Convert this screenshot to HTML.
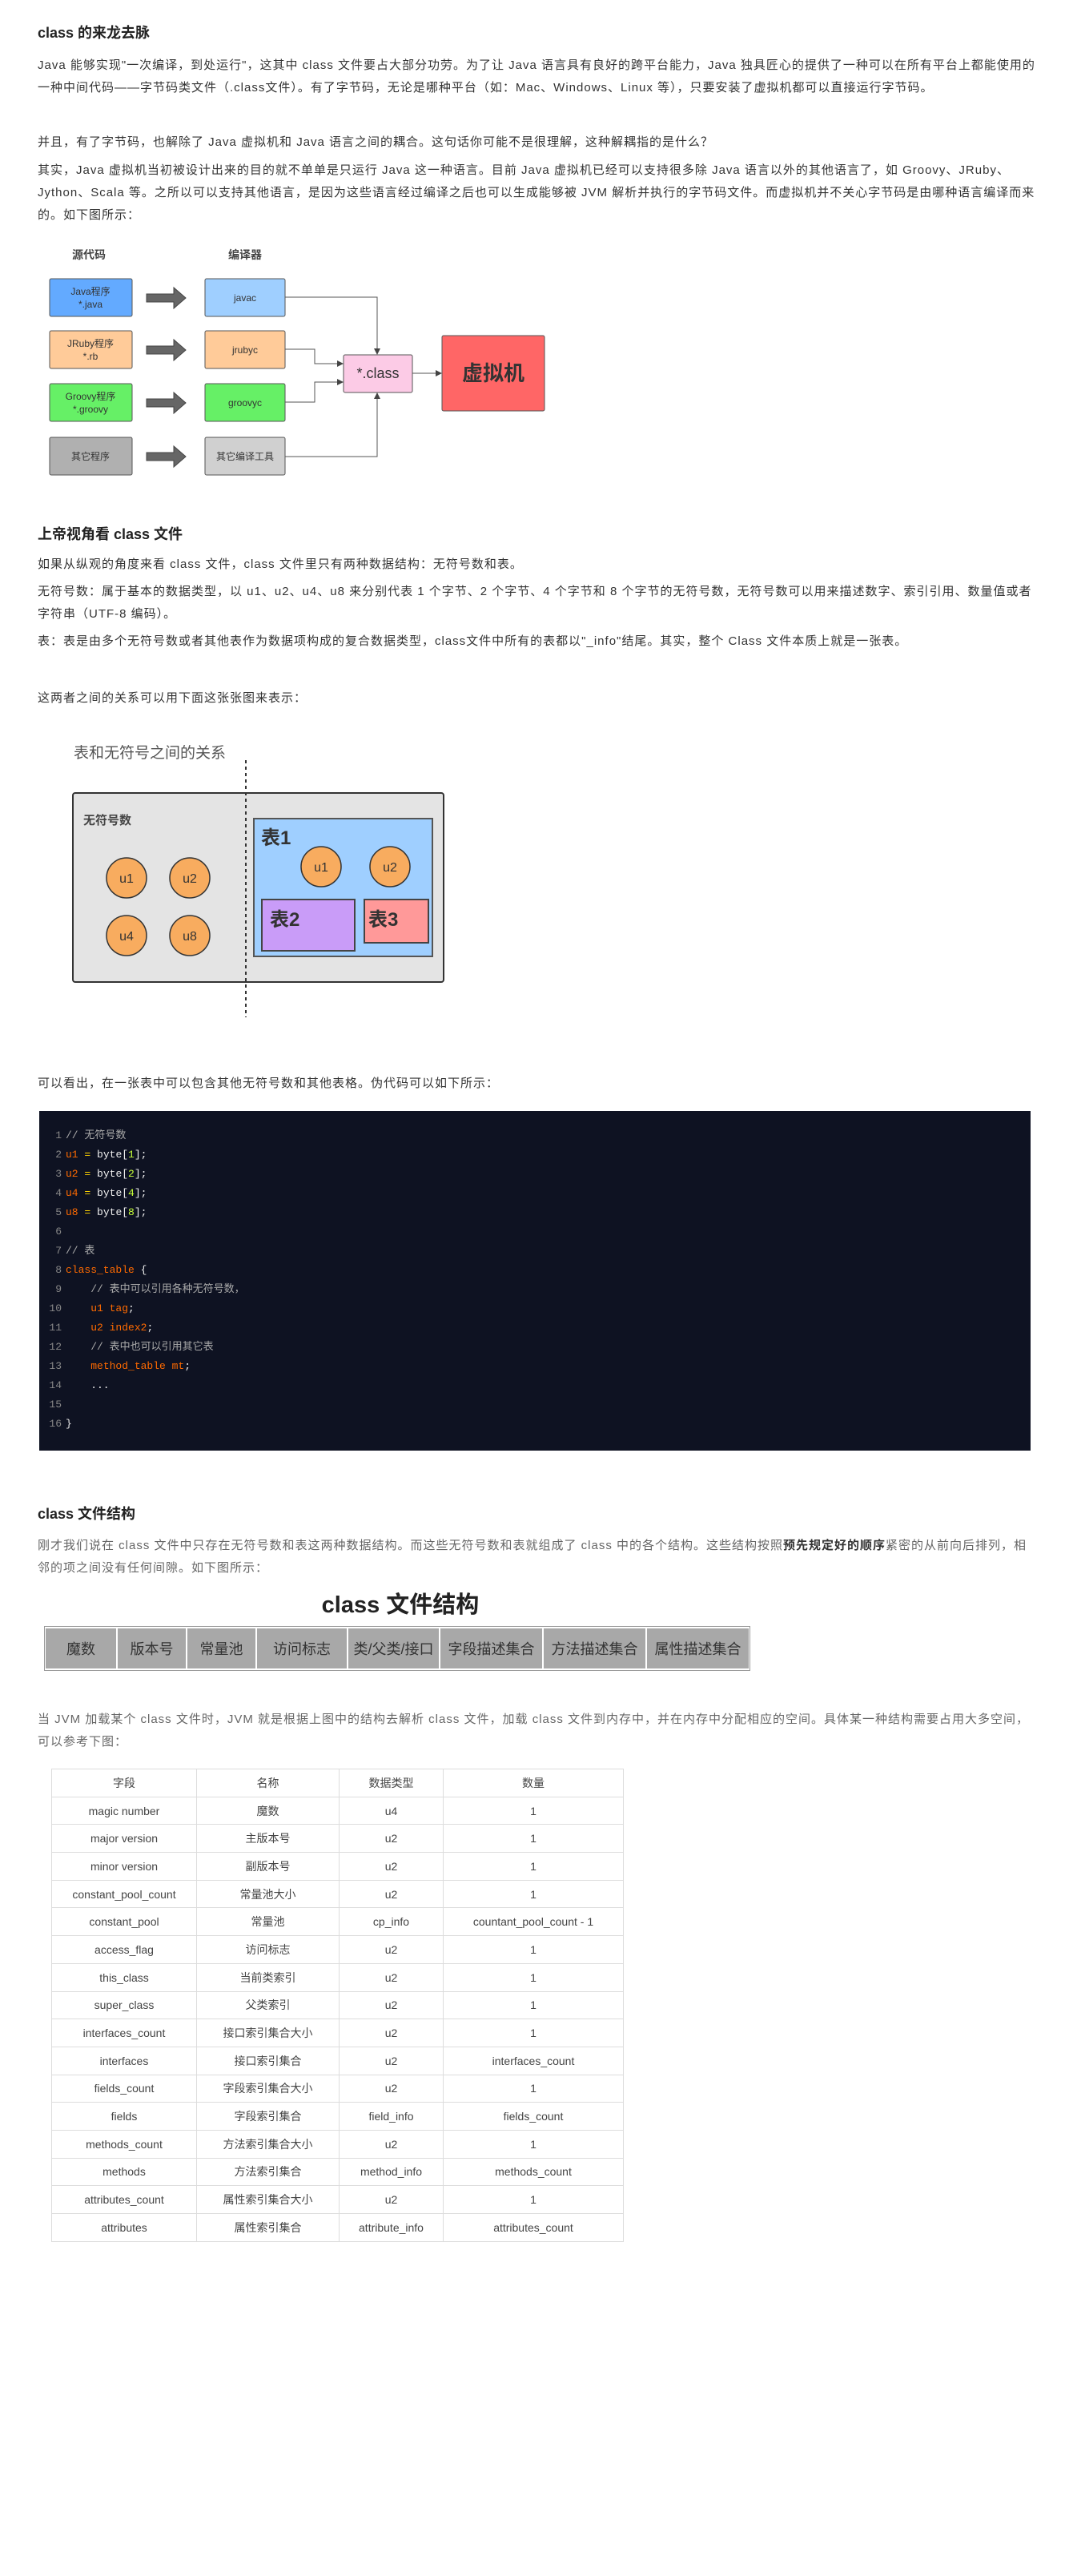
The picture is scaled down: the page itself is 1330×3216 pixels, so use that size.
<!DOCTYPE html>
<html><head><meta charset="utf-8"><style>
*{margin:0;padding:0;box-sizing:border-box}
body{width:1330px;height:3216px;background:#fff;position:relative;font-family:"Liberation Sans","Noto Sans CJK SC",sans-serif;color:#333;font-size:14px;overflow:hidden}
.a{position:absolute;left:47px;width:1250px;line-height:28px;font-size:15px;letter-spacing:1px}
h2{position:absolute;left:47px;font-size:18px;font-weight:bold;color:#222;line-height:28px}
.g{color:#666}
.code{position:absolute;left:49px;top:1387px;width:1238px;height:424px;background:#0e1222;font-family:"Liberation Mono","Noto Sans CJK SC",monospace;font-size:13px;color:#eee;padding-top:19px}
.code div{height:24px;line-height:24px;white-space:pre}
.n{color:#888;display:inline-block;width:33px;text-align:right;padding-right:5px}
.o{color:#ff6a00}.y{color:#ffd400}.l{color:#c8ff3a}.c{color:#aaa}
svg{position:absolute;left:0;overflow:visible}
table.t{position:absolute;left:64px;top:2208px;border-collapse:collapse;font-size:14px;color:#444}
table.t td{border:1px solid #ddd;height:34.7px;text-align:center;padding:0}
</style></head><body>
<h2 style="top:27px">class 的来龙去脉</h2>
<div class="a" style="top:68px">Java 能够实现"一次编译，到处运行"，这其中 class 文件要占大部分功劳。为了让 Java 语言具有良好的跨平台能力，Java 独具匠心的提供了一种可以在所有平台上都能使用的一种中间代码——字节码类文件（.class文件）。有了字节码，无论是哪种平台（如：Mac、Windows、Linux 等），只要安装了虚拟机都可以直接运行字节码。</div>
<div class="a" style="top:164px">并且，有了字节码，也解除了 Java 虚拟机和 Java 语言之间的耦合。这句话你可能不是很理解，这种解耦指的是什么？</div>
<div class="a" style="top:199px">其实，Java 虚拟机当初被设计出来的目的就不单单是只运行 Java 这一种语言。目前 Java 虚拟机已经可以支持很多除 Java 语言以外的其他语言了，如 Groovy、JRuby、Jython、Scala 等。之所以可以支持其他语言，是因为这些语言经过编译之后也可以生成能够被 JVM 解析并执行的字节码文件。而虚拟机并不关心字节码是由哪种语言编译而来的。如下图所示：</div>

<svg width="700" height="300" style="top:300px" font-family="Liberation Sans,Noto Sans CJK SC,sans-serif">
<g font-size="14" font-weight="bold" fill="#444" text-anchor="middle"><text x="111" y="23">源代码</text><text x="306" y="23">编译器</text></g>
<g stroke="#555" stroke-width="1" font-size="12" text-anchor="middle" fill="#333">
<rect x="62" y="48" width="103" height="47" rx="2" fill="#63aaff"/><rect x="256" y="48" width="100" height="47" rx="2" fill="#9fcfff"/>
<rect x="62" y="113" width="103" height="47" rx="2" fill="#ffcb99"/><rect x="256" y="113" width="100" height="47" rx="2" fill="#ffcb99"/>
<rect x="62" y="179" width="103" height="47" rx="2" fill="#66f066"/><rect x="256" y="179" width="100" height="47" rx="2" fill="#66f066"/>
<rect x="62" y="246" width="103" height="47" rx="2" fill="#b0b0b0"/><rect x="256" y="246" width="100" height="47" rx="2" fill="#d0d0d0"/>
<rect x="429" y="143" width="86" height="47" rx="2" fill="#fccbe6"/><rect x="552" y="119" width="128" height="94" rx="2" fill="#ff6666"/>
<path d="M356 71H471V137M356 136H393V154H423M356 202H393V177H423M356 270H471V196M515 166H546" fill="none"/>
</g>
<g fill="#444"><path d="M471 143l-4-8h8zM429 154l-8-4v8zM429 177l-8-4v8zM471 190l-4 8h8zM552 166l-8-4v8z"/></g>
<g fill="#666" stroke="#444" stroke-width="1"><path d="M183 67h34v-8l15 13-15 13v-8h-34z"/><path d="M183 132h34v-8l15 13-15 13v-8h-34z"/><path d="M183 198h34v-8l15 13-15 13v-8h-34z"/><path d="M183 265h34v-8l15 13-15 13v-8h-34z"/></g>
<g font-size="12" fill="#333" text-anchor="middle">
<text x="113" y="68">Java程序</text><text x="113" y="84">*.java</text><text x="306" y="76">javac</text>
<text x="113" y="133">JRuby程序</text><text x="113" y="149">*.rb</text><text x="306" y="141">jrubyc</text>
<text x="113" y="199">Groovy程序</text><text x="113" y="215">*.groovy</text><text x="306" y="207">groovyc</text>
<text x="113" y="274">其它程序</text><text x="306" y="274">其它编译工具</text>
<text x="472" y="172" font-size="18">*.class</text><text x="616" y="175" font-size="26" font-weight="bold">虚拟机</text></g>
</svg>

<h2 style="top:653px">上帝视角看 class 文件</h2>
<div class="a" style="top:691px">如果从纵观的角度来看 class 文件，class 文件里只有两种数据结构：无符号数和表。</div>
<div class="a" style="top:725px">无符号数：属于基本的数据类型，以 u1、u2、u4、u8 来分别代表 1 个字节、2 个字节、4 个字节和 8 个字节的无符号数，无符号数可以用来描述数字、索引引用、数量值或者字符串（UTF-8 编码）。</div>
<div class="a" style="top:787px">表：表是由多个无符号数或者其他表作为数据项构成的复合数据类型，class文件中所有的表都以"_info"结尾。其实，整个 Class 文件本质上就是一张表。</div>
<div class="a" style="top:858px">这两者之间的关系可以用下面这张张图来表示：</div>

<svg width="600" height="340" style="top:920px" font-family="Liberation Sans,Noto Sans CJK SC,sans-serif">
<text x="92" y="26" font-size="19" fill="#555">表和无符号之间的关系</text>
<rect x="91" y="70" width="463" height="236" rx="3" fill="#e4e4e4" stroke="#333" stroke-width="2"/>
<text x="104" y="109" font-size="15" font-weight="bold" fill="#444">无符号数</text>
<rect x="317" y="102" width="223" height="172" fill="#9fcfff" stroke="#555" stroke-width="2"/>
<text x="326" y="134" font-size="24" font-weight="bold" fill="#333">表1</text>
<rect x="327" y="203" width="116" height="64" fill="#c99cf8" stroke="#444" stroke-width="2"/>
<rect x="455" y="203" width="80" height="54" fill="#ff9999" stroke="#444" stroke-width="2"/>
<text x="337" y="236" font-size="24" font-weight="bold" fill="#333">表2</text>
<text x="460" y="236" font-size="24" font-weight="bold" fill="#333">表3</text>
<g fill="#f8ac5f" stroke="#333" stroke-width="1.5"><circle cx="158" cy="176" r="25"/><circle cx="237" cy="176" r="25"/><circle cx="158" cy="248" r="25"/><circle cx="237" cy="248" r="25"/><circle cx="401" cy="162" r="25"/><circle cx="487" cy="162" r="25"/></g>
<g font-size="16" fill="#333" text-anchor="middle"><text x="158" y="182">u1</text><text x="237" y="182">u2</text><text x="158" y="254">u4</text><text x="237" y="254">u8</text><text x="401" y="168">u1</text><text x="487" y="168">u2</text></g>
<line x1="307" y1="29" x2="307" y2="350" stroke="#333" stroke-width="2" stroke-dasharray="4,4"/>
</svg>

<div class="a" style="top:1339px">可以看出，在一张表中可以包含其他无符号数和其他表格。伪代码可以如下所示：</div>
<div class="code">
<div><span class="n">1</span><span class="c">// 无符号数</span></div>
<div><span class="n">2</span><span class="o">u1</span> <span class="y">=</span> byte[<span class="l">1</span>];</div>
<div><span class="n">3</span><span class="o">u2</span> <span class="y">=</span> byte[<span class="l">2</span>];</div>
<div><span class="n">4</span><span class="o">u4</span> <span class="y">=</span> byte[<span class="l">4</span>];</div>
<div><span class="n">5</span><span class="o">u8</span> <span class="y">=</span> byte[<span class="l">8</span>];</div>
<div><span class="n">6</span></div>
<div><span class="n">7</span><span class="c">// 表</span></div>
<div><span class="n">8</span><span class="o">class_table</span> {</div>
<div><span class="n">9</span>    <span class="c">// 表中可以引用各种无符号数，</span></div>
<div><span class="n">10</span>    <span class="o">u1 tag</span>;</div>
<div><span class="n">11</span>    <span class="o">u2 index2</span>;</div>
<div><span class="n">12</span>    <span class="c">// 表中也可以引用其它表</span></div>
<div><span class="n">13</span>    <span class="o">method_table mt</span>;</div>
<div><span class="n">14</span>    ...</div>
<div><span class="n">15</span></div>
<div><span class="n">16</span>}</div>
</div>

<h2 style="top:1876px">class 文件结构</h2>
<div class="a g" style="top:1916px">刚才我们说在 class 文件中只存在无符号数和表这两种数据结构。而这些无符号数和表就组成了 class 中的各个结构。这些结构按照<b style="color:#333">预先规定好的顺序</b>紧密的从前向后排列，相邻的项之间没有任何间隙。如下图所示：</div>
<div style="position:absolute;left:300px;width:400px;top:1980px;text-align:center;font-size:29px;font-weight:bold;color:#222">class 文件结构</div>
<div style="position:absolute;left:55px;top:2030px;width:882px;height:56px;border:1px solid #999;background:#fff;display:flex;padding:2px 1px;font-size:18px;color:#333">
<div style="width:88px;background:#a8a8a8;margin-right:2px;display:flex;align-items:center;justify-content:center">魔数</div>
<div style="width:85px;background:#a8a8a8;margin-right:2px;display:flex;align-items:center;justify-content:center">版本号</div>
<div style="width:85px;background:#a8a8a8;margin-right:2px;display:flex;align-items:center;justify-content:center">常量池</div>
<div style="width:112px;background:#a8a8a8;margin-right:2px;display:flex;align-items:center;justify-content:center">访问标志</div>
<div style="width:113px;background:#a8a8a8;margin-right:2px;display:flex;align-items:center;justify-content:center">类/父类/接口</div>
<div style="width:127px;background:#a8a8a8;margin-right:2px;display:flex;align-items:center;justify-content:center">字段描述集合</div>
<div style="width:127px;background:#a8a8a8;margin-right:2px;display:flex;align-items:center;justify-content:center">方法描述集合</div>
<div style="flex:1;background:#a8a8a8;display:flex;align-items:center;justify-content:center">属性描述集合</div>
</div>
<div class="a g" style="top:2133px">当 JVM 加载某个 class 文件时，JVM 就是根据上图中的结构去解析 class 文件，加载 class 文件到内存中，并在内存中分配相应的空间。具体某一种结构需要占用大多空间，可以参考下图：</div>

<table class="t">
<colgroup><col style="width:181px"><col style="width:178px"><col style="width:130px"><col style="width:225px"></colgroup>
<tr><td>字段</td><td>名称</td><td>数据类型</td><td>数量</td></tr>
<tr><td>magic number</td><td>魔数</td><td>u4</td><td>1</td></tr>
<tr><td>major version</td><td>主版本号</td><td>u2</td><td>1</td></tr>
<tr><td>minor version</td><td>副版本号</td><td>u2</td><td>1</td></tr>
<tr><td>constant_pool_count</td><td>常量池大小</td><td>u2</td><td>1</td></tr>
<tr><td>constant_pool</td><td>常量池</td><td>cp_info</td><td>countant_pool_count - 1</td></tr>
<tr><td>access_flag</td><td>访问标志</td><td>u2</td><td>1</td></tr>
<tr><td>this_class</td><td>当前类索引</td><td>u2</td><td>1</td></tr>
<tr><td>super_class</td><td>父类索引</td><td>u2</td><td>1</td></tr>
<tr><td>interfaces_count</td><td>接口索引集合大小</td><td>u2</td><td>1</td></tr>
<tr><td>interfaces</td><td>接口索引集合</td><td>u2</td><td>interfaces_count</td></tr>
<tr><td>fields_count</td><td>字段索引集合大小</td><td>u2</td><td>1</td></tr>
<tr><td>fields</td><td>字段索引集合</td><td>field_info</td><td>fields_count</td></tr>
<tr><td>methods_count</td><td>方法索引集合大小</td><td>u2</td><td>1</td></tr>
<tr><td>methods</td><td>方法索引集合</td><td>method_info</td><td>methods_count</td></tr>
<tr><td>attributes_count</td><td>属性索引集合大小</td><td>u2</td><td>1</td></tr>
<tr><td>attributes</td><td>属性索引集合</td><td>attribute_info</td><td>attributes_count</td></tr>
</table>
</body></html>
